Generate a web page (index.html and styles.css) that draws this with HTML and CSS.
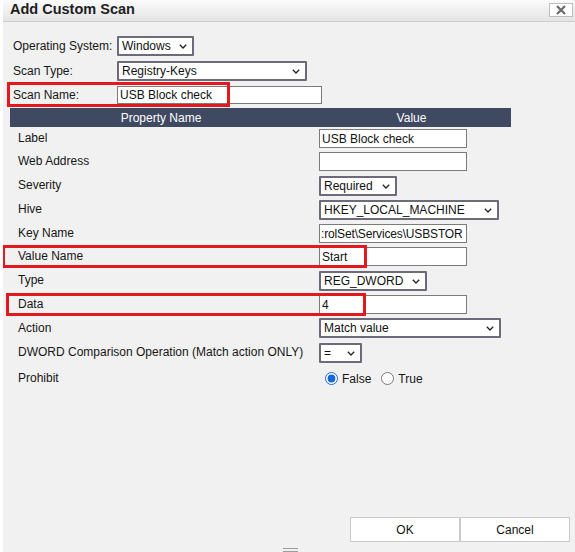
FILE: index.html
```html
<!DOCTYPE html>
<html>
<head>
<meta charset="utf-8">
<link rel="stylesheet" href="styles.css">
</head>
<body>
<div class="dialog">
  <div class="titlebar">
    <span class="title">Add Custom Scan</span>
    <button class="close" aria-label="Close">
      <svg width="12" height="10" viewBox="0 0 12 10"><path d="M2 1 L10 9 M10 1 L2 9" stroke="#6a6a6a" stroke-width="2.2" fill="none"/></svg>
    </button>
  </div>
  <div class="body">
    <div class="form">
      <label class="flabel">Operating System:</label>
      <span class="selbox"><select class="sel w-os"><option>Windows</option></select><svg class="chev" width="8" height="5" viewBox="0 0 8 5"><path d="M0.8 0.8 L4 4 L7.2 0.8" stroke="#222" stroke-width="1.3" fill="none"/></svg></span>
      <label class="flabel">Scan Type:</label>
      <span class="selbox"><select class="sel w-type"><option>Registry-Keys</option></select><svg class="chev" width="8" height="5" viewBox="0 0 8 5"><path d="M0.8 0.8 L4 4 L7.2 0.8" stroke="#222" stroke-width="1.3" fill="none"/></svg></span>
      <label class="flabel">Scan Name:</label>
      <input class="inp w-name" value="USB Block check">
    </div>
    <div class="table">
      <div class="thead"><div>Property Name</div><div>Value</div></div>
      <div class="row"><div class="name">Label</div><div class="val"><input class="inp w-std" value="USB Block check"></div></div>
      <div class="row"><div class="name">Web Address</div><div class="val"><input class="inp w-std" value=""></div></div>
      <div class="row"><div class="name">Severity</div><div class="val"><span class="selbox"><select class="sel w-sev"><option>Required</option></select><svg class="chev" width="8" height="5" viewBox="0 0 8 5"><path d="M0.8 0.8 L4 4 L7.2 0.8" stroke="#222" stroke-width="1.3" fill="none"/></svg></span></div></div>
      <div class="row"><div class="name">Hive</div><div class="val"><span class="selbox"><select class="sel w-hive"><option>HKEY_LOCAL_MACHINE</option></select><svg class="chev" width="8" height="5" viewBox="0 0 8 5"><path d="M0.8 0.8 L4 4 L7.2 0.8" stroke="#222" stroke-width="1.3" fill="none"/></svg></span></div></div>
      <div class="row"><div class="name">Key Name</div><div class="val"><input class="inp w-std keyname" value=":rolSet\Services\USBSTOR"></div></div>
      <div class="row"><div class="name">Value Name</div><div class="val"><input class="inp w-std" value="Start"></div></div>
      <div class="row"><div class="name">Type</div><div class="val"><span class="selbox"><select class="sel w-dw"><option>REG_DWORD</option></select><svg class="chev" width="8" height="5" viewBox="0 0 8 5"><path d="M0.8 0.8 L4 4 L7.2 0.8" stroke="#222" stroke-width="1.3" fill="none"/></svg></span></div></div>
      <div class="row"><div class="name">Data</div><div class="val"><input class="inp w-std" value="4"></div></div>
      <div class="row"><div class="name">Action</div><div class="val"><span class="selbox"><select class="sel w-act"><option>Match value</option></select><svg class="chev" width="8" height="5" viewBox="0 0 8 5"><path d="M0.8 0.8 L4 4 L7.2 0.8" stroke="#222" stroke-width="1.3" fill="none"/></svg></span></div></div>
      <div class="row"><div class="name">DWORD Comparison Operation (Match action ONLY)</div><div class="val"><span class="selbox"><select class="sel w-op"><option>=</option></select><svg class="chev" width="8" height="5" viewBox="0 0 8 5"><path d="M0.8 0.8 L4 4 L7.2 0.8" stroke="#222" stroke-width="1.3" fill="none"/></svg></span></div></div>
      <div class="row prohibit"><div class="name">Prohibit</div>
        <div class="val radios">
          <label class="radio"><input type="radio" name="p" checked><span>False</span></label>
          <label class="radio"><input type="radio" name="p"><span>True</span></label>
        </div>
      </div>
    </div>
    <div class="buttons">
      <button class="btn">OK</button><button class="btn">Cancel</button>
    </div>
    <div class="grip"></div>
  </div>
  <div class="mark mark-scan"></div>
  <div class="mark mark-valname"></div>
  <div class="mark mark-data"></div>
</div>
</body>
</html>
```

FILE: styles.css
```css
html, body {
  margin: 0;
  background: #ffffff;
}
body {
  font-family: "Liberation Sans", Arial, sans-serif;
  font-size: 12px;
  color: #161616;
}
.dialog {
  margin-left: 3px;
  width: 572px;
  height: 552px;
  background: #f1f1f1;
  display: flex;
  flex-direction: column;
  position: relative;
  overflow: hidden;
}
.titlebar {
  height: 21px;
  border-bottom: 1px solid #cfcfcf;
  background: linear-gradient(#fbfbfb, #e4e4e4);
  display: flex;
  align-items: flex-start;
  justify-content: space-between;
  padding: 0 2px 0 7px;
}
.title {
  font-weight: bold;
  font-size: 14.5px;
  line-height: 19px;
  color: #1e1e1e;
}
.close {
  margin-top: 3px;
  width: 24px;
  height: 14px;
  padding: 0;
  background: #ffffff;
  border: 1px solid #bdbdbd;
  display: flex;
  align-items: center;
  justify-content: center;
}
.body {
  flex: 1;
  display: flex;
  flex-direction: column;
  padding: 14px 5px 0 7px;
}
.form {
  display: grid;
  grid-template-columns: 104px auto;
  row-gap: 5px;
  align-items: center;
  justify-items: start;
  padding-left: 3px;
  margin-bottom: 4px;
}
.inp {
  box-sizing: border-box;
  height: 19px;
  border: 1px solid #7b7b7b;
  border-radius: 0;
  background: #fff;
  font-family: "Liberation Sans", Arial, sans-serif;
  font-size: 12px;
  color: #111;
  padding: 0 2px;
  margin: 0;
  outline: none;
}
.keyname {
  padding-left: 1px;
  letter-spacing: -0.15px;
}
.selbox {
  position: relative;
  display: inline-flex;
}
.sel {
  -webkit-appearance: none;
  appearance: none;
  box-sizing: border-box;
  height: 20px;
  border: 2px solid #6e6a7c;
  border-radius: 1px;
  background-color: #fff;
  font-family: "Liberation Sans", Arial, sans-serif;
  font-size: 12px;
  color: #111;
  padding: 0 0 0 3px;
  margin: 0;
  outline: none;
}
.chev {
  position: absolute;
  right: 7px;
  top: 8px;
  pointer-events: none;
}
.w-os { width: 77px; }
.w-type { width: 190px; }
.w-name { width: 205px; height: 18px; }
.w-std { width: 148px; }
.w-sev { width: 78px; }
.w-hive { width: 180px; }
.w-dw { width: 108px; }
.w-act { width: 182px; }
.w-op { width: 43px; }

.table {
  width: 501px;
}
.thead, .row {
  display: grid;
  grid-template-columns: 302px 199px;
  align-items: center;
}
.thead {
  height: 19px;
  background: #3f4a62;
  color: #fff;
  text-align: center;
}
.row {
  padding: 2px 0 2.3px;
}
.name {
  padding-left: 8px;
  padding-bottom: 1px;
  white-space: nowrap;
}
.val {
  padding-left: 7px;
  display: flex;
  align-items: center;
}
.prohibit {
  height: 26px;
  padding: 1px 0 0;
}
.radio {
  display: flex;
  align-items: center;
}
.radio input {
  margin: 0 4px 0 6px;
  width: 13px;
  height: 13px;
  accent-color: #1769d9;
}
.radio + .radio input {
  margin-left: 10px;
}
.buttons {
  margin-top: auto;
  display: flex;
  justify-content: flex-end;
}
.btn {
  width: 110px;
  height: 25px;
  background: #fff;
  border: 1px solid #cacaca;
  font-family: "Liberation Sans", Arial, sans-serif;
  font-size: 12px;
  color: #111;
  margin: 0;
  padding: 0;
}
.grip {
  align-self: center;
  margin: 6px 0 0 0;
  width: 15px;
  height: 2px;
  border-top: 1px solid #9c9c9c;
  border-bottom: 1px solid #9c9c9c;
}
.mark {
  position: absolute;
  border: 3px solid #e3191f;
  box-sizing: border-box;
  pointer-events: none;
}
.mark-scan { left: 4px; top: 82px; width: 223px; height: 25px; }
.mark-valname { left: -1px; top: 245px; width: 365px; height: 23px; }
.mark-data { left: 3px; top: 293px; width: 360px; height: 23px; }
```
